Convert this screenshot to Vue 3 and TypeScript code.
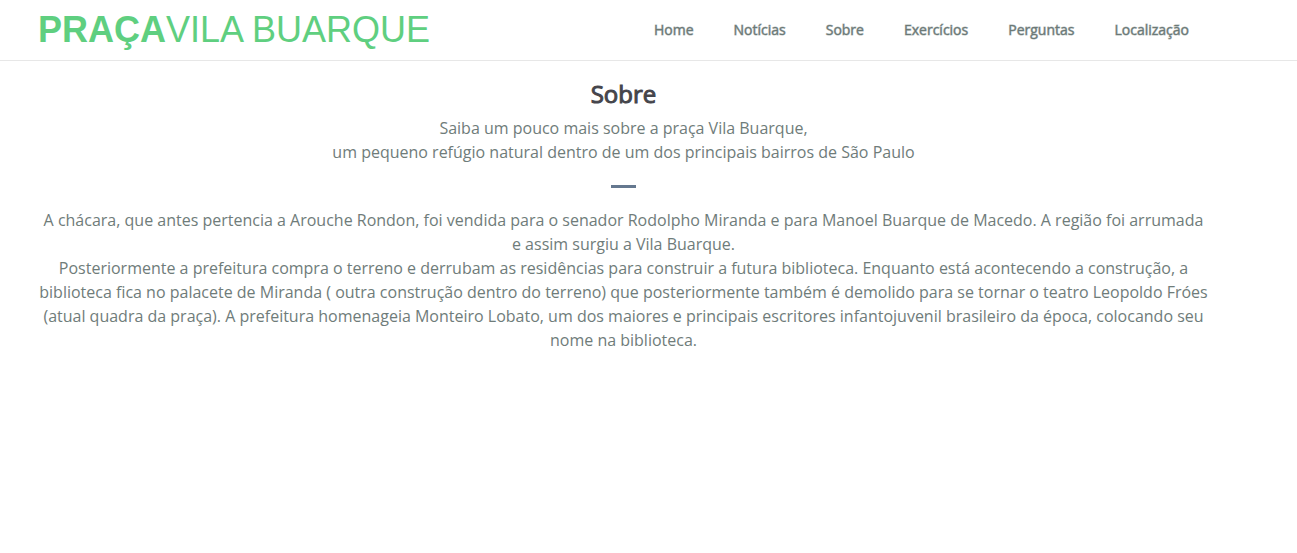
<script setup lang="ts">
interface NavItem {
  label: string
  href: string
}

const navItems: NavItem[] = [
  { label: 'Home', href: '#home' },
  { label: 'Notícias', href: '#noticias' },
  { label: 'Sobre', href: '#sobre' },
  { label: 'Exercícios', href: '#exercicios' },
  { label: 'Perguntas', href: '#perguntas' },
  { label: 'Localização', href: '#localizacao' },
]
</script>

<template>
  <header class="header">
    <div class="container bar">
      <a class="logo" href="#home"><b>PRAÇA</b>VILA BUARQUE</a>
      <nav class="nav">
        <a v-for="item in navItems" :key="item.href" class="link" :href="item.href">{{ item.label }}</a>
      </nav>
    </div>
  </header>
  <main id="sobre" class="container about">
    <h1 class="title">Sobre</h1>
    <p class="lead">
      Saiba um pouco mais sobre a praça Vila Buarque,<br />
      um pequeno refúgio natural dentro de um dos principais bairros de São Paulo
    </p>
    <hr class="divider" />
    <p class="text">
      A chácara, que antes pertencia a Arouche Rondon, foi vendida para o senador Rodolpho Miranda e para Manoel Buarque de Macedo. A região foi arrumada e assim surgiu a Vila Buarque.<br />
      Posteriormente a prefeitura compra o terreno e derrubam as residências para construir a futura biblioteca. Enquanto está acontecendo a construção, a biblioteca fica no palacete de Miranda ( outra construção dentro do terreno) que posteriormente também é demolido para se tornar o teatro Leopoldo Fróes (atual quadra da praça). A prefeitura homenageia Monteiro Lobato, um dos maiores e principais escritores infantojuvenil brasileiro da época, colocando seu nome na biblioteca.
    </p>
  </main>
</template>

<style>
body {
  margin: 0;
  background: #fff;
}
</style>

<style scoped>
.container {
  box-sizing: border-box;
  max-width: 1247px;
  margin: 0 50px 0 0;
  padding: 0 38px;
}
.header {
  border-bottom: 1px solid #e7e7e7;
}
.bar {
  display: flex;
  align-items: center;
  justify-content: space-between;
  height: 60px;
}
.logo {
  font: 36px/60px "Liberation Sans", Arial, sans-serif;
  color: #5fcf80;
  text-decoration: none;
  white-space: nowrap;
}
.nav {
  display: flex;
  gap: 40px;
  padding-right: 20px;
}
.link {
  font: 400 14px/20px "Open Sans", sans-serif;
  color: #6b7977;
  text-decoration: none;
  -webkit-text-stroke: 1px rgb(107 121 119 / 50%);
}
.about {
  padding-top: 18px;
  font: 16px/24px "Open Sans", sans-serif;
  color: #6f7c7a;
  text-align: center;
}
.title {
  margin: 0 0 8px;
  font-size: 24px;
  line-height: 29px;
  font-weight: 400;
  color: #45454b;
  -webkit-text-stroke: 1px #45454b;
}
.lead,
.text {
  margin: 0;
}
.divider {
  width: 25px;
  height: 3px;
  margin: 21px auto 20px;
  border: 0;
  background: #65788f;
}
</style>
